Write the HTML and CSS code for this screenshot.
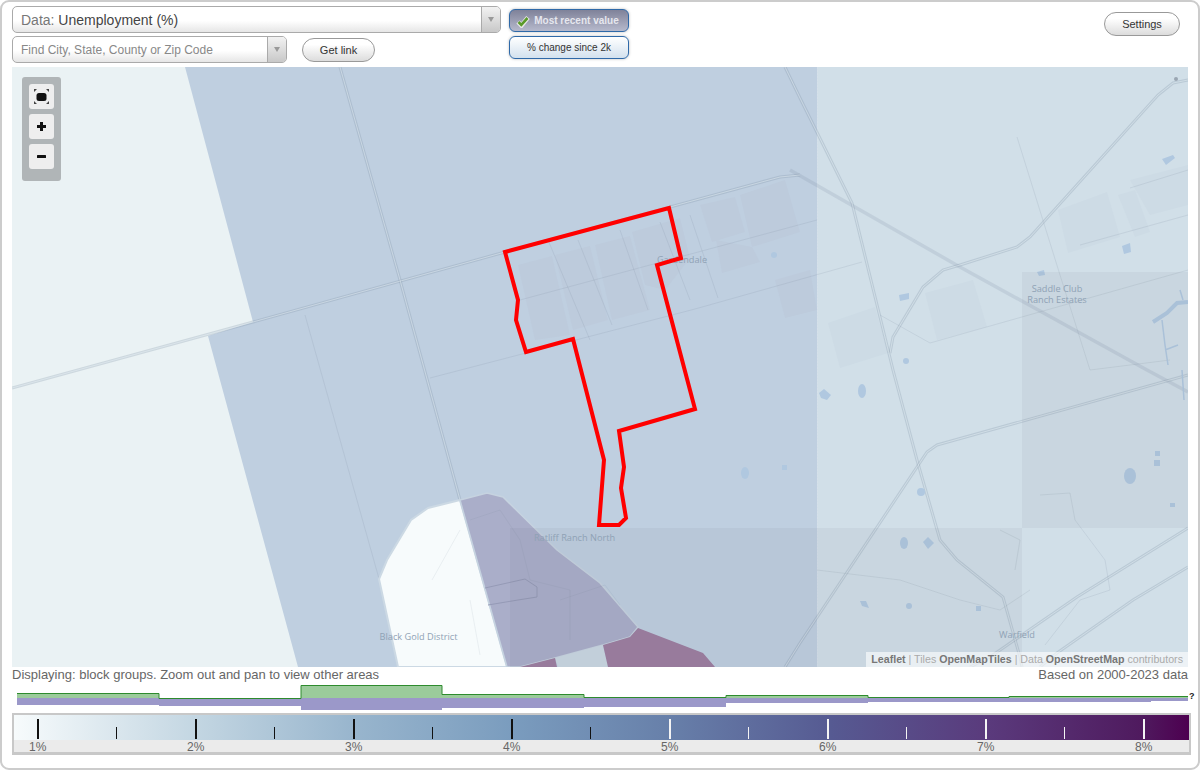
FILE: index.html
```html
<!DOCTYPE html>
<html lang="en">
<head>
    <meta charset="UTF-8">
    <title>Unemployment map</title>
    <link rel="stylesheet" href="styles.css">
</head>
<body>
<div class="frame">
    <div class="topbar">
        <div class="selects">
            <div class="select select-data">
                <div class="select-text"><span class="select-key">Data:</span> Unemployment (%)</div>
                <div class="select-arrow"><i></i></div>
            </div>
            <div class="find-row">
                <div class="select select-find">
                    <div class="select-text">Find City, State, County or Zip Code</div>
                    <div class="select-arrow"><i></i></div>
                </div>
                <button class="pill link-btn">Get link</button>
            </div>
        </div>
        <div class="toggles">
            <button class="toggle active">
                <svg class="check" viewBox="0 0 14 14" width="14" height="14">
                    <path class="check-halo" d="M2 8l3.500 3.500L12 3.500"/>
                    <path class="check-mark" d="M2.500 8l2.800 2.800L11.500 4"/>
                </svg>
                Most recent value
            </button>
            <button class="toggle">% change since 2k</button>
        </div>
        <button class="pill settings-btn">Settings</button>
    </div>

    <div class="map">
        <svg class="map-svg" viewBox="12 67 1176 600" width="1176" height="600">
            <defs>
                <g id="roads">
                    <path d="M340 67L400 280L460 500"/>
                    <path d="M12 388L253 322L505 252L780 177L800 175"/>
                    <path d="M785 67L800 98L852 203L893 370L917 460L940 540L957 560L1003 597L1020 657L1022 667"/>
                    <path d="M1188 80L1173 83L1158 95L1030 237L1017 247L960 265L943 270L923 287L893 337L890 353"/>
                    <path d="M1188 375L937 445L927 452L800 643L785 667"/>
                    <path d="M1188 528L1077 597L990 657L970 667"/>
                    <path d="M1188 567L1133 600L1057 653L1040 667"/>
                </g>
            </defs>

            <!-- areas -->
            <rect class="a-right" x="817" y="67" width="371" height="600"/>
            <polygon class="a-blue" points="185,67 817,67 817,667 298,667 208,336 253,322"/>
            <line class="a-seam" x1="817.500" y1="67" x2="817.500" y2="667"/>

            <!-- land use blocks -->
            <polygon class="block" points="1058,210 1107,192 1120,237 1068,253"/>
            <polygon class="block" points="925,293 973,280 987,327 937,340"/>
            <polygon class="block" points="828,323 875,307 888,353 840,368"/>
            <polygon class="block" points="1130,180 1188,165 1188,205 1150,215"/>
            <polygon class="block" points="1118,195 1135,190 1150,232 1135,237"/>
            <polygon class="block-dark" points="740,195 785,180 800,232 752,247"/>
            <polygon class="block-dark" points="700,205 735,197 745,232 712,242"/>
            <polygon class="block-dark" points="716,240 752,247 760,262 722,273"/>
            <polygon class="block-dark" points="632,232 680,218 690,258 665,290 645,285"/>
            <polygon class="block-dark" points="775,280 810,270 817,310 785,318"/>
            <polygon class="block-dark" points="595,245 630,236 650,310 612,320"/>
            <polygon class="block-dark" points="555,255 590,246 608,320 573,330"/>
            <polygon class="block-dark" points="518,265 552,256 570,335 535,340"/>

            <!-- thin streets -->
            <path class="street" d="M430 378L695 309L862 262"/>
            <path class="street" d="M520 300L817 220"/>
            <path class="street" d="M305 315L392 625"/>
            <path class="street" d="M548 240L590 340M578 240L612 325M620 230L648 310M660 222L690 300M690 215L718 298"/>
            <path class="street" d="M1017 137L1060 275L1090 370L1170 360M1188 170L1130 188M1188 215L1080 245"/>
            <path class="street" d="M880 315L930 343L1188 270"/>
            <path class="street" d="M1040 495L1070 493L1075 520L1105 560L1110 590L1080 600L1045 645M1000 530L1020 540L1015 570"/>
            <path class="street" d="M817 570L900 580L960 600L1000 610L1030 590"/>

            <!-- roads -->
            <path class="road-wide" d="M790 170L960 267L1147 370L1188 392"/>
            <use class="road-outer" href="#roads"/>
            <use class="road-inner" href="#roads"/>

            <!-- water -->
            <g class="water">
                <ellipse cx="745" cy="473" rx="4" ry="6"/>
                <rect x="782" y="465" width="5" height="5"/>
                <circle cx="774" cy="255" r="3"/>
                <polygon points="899,295 909,293 909,299 900,301"/>
                <polygon points="1122,246 1130,243 1131,252 1124,254"/>
                <polygon points="819,393 824,389 831,395 827,400 821,398"/>
                <ellipse cx="862" cy="391" rx="4" ry="7"/>
                <circle cx="906" cy="361" r="3"/>
                <ellipse cx="904" cy="543" rx="4" ry="6"/>
                <polygon points="923,542 928,537 934,543 928,549"/>
                <circle cx="921" cy="492" r="4"/>
                <polygon points="860,601 866,601 869,608 862,606"/>
                <circle cx="909" cy="606" r="3"/>
                <rect x="976" y="606" width="5" height="5"/>
                <ellipse cx="1130" cy="476" rx="6" ry="8"/>
                <rect x="1154" y="460" width="6" height="6"/>
                <rect x="1170" y="503" width="5" height="4"/>
                <rect x="1155" y="451" width="5" height="5"/>
                <polygon points="1037,272 1044,270 1045,275 1039,276"/>
                <polygon points="1162,159 1173,155 1175,158 1166,165"/>
            </g>
            <path class="river" d="M1153 322L1167 313L1177 303L1188 302"/>
            <path class="river-thin" d="M1162 320L1165 345L1168 365M1165 350L1178 345M1180 290L1183 300M1182 370L1184 400"/>
            <circle class="peak" cx="1176" cy="79" r="2"/>

            <!-- block groups -->
            <polygon class="g-white" points="460,500 428,508 411,520 387,560 379,579 398,667 507,667"/>
            <polygon class="g-mid" points="460,500 487,493 503,497 557,550 600,583 638,627 630,637 603,645 555,658 520,667 507,667"/>
            <polygon class="g-pale" points="555,658 603,645 608,667 558,667"/>
            <polygon class="g-dark" points="638,628 703,653 715,667 608,667 603,645 630,637"/>
            <polygon class="g-dark" points="520,667 555,658 557,667"/>
            <path class="street-line" d="M485 588L525 579L537 587L537 597L518 600L488 605"/>
            <path class="street-soft" d="M470 520L500 510L520 540L530 580L570 590L570 640M560 600L605 585L620 605M432 580L460 530M480 655L470 600"/>

            <!-- darker tiles -->
            <rect class="tile" x="510" y="528" width="307" height="139"/>
            <rect class="tile" x="817" y="528" width="205" height="139"/>
            <rect class="tile" x="1022" y="272" width="166" height="256"/>

            <!-- place names -->
            <text class="place" x="682" y="263" text-anchor="middle">Gardendale</text>
            <text class="place" x="574.500" y="541" text-anchor="middle">Ratliff Ranch North</text>
            <text class="place" x="418.500" y="640" text-anchor="middle">Black Gold District</text>
            <text class="place" text-anchor="middle"><tspan x="1057" y="292">Saddle Club</tspan><tspan x="1057" y="303">Ranch Estates</tspan></text>
            <text class="place" x="1017" y="638" text-anchor="middle">Warfield</text>

            <polygon class="selected" points="505,252 669,208 681,258 657,265 695,409 619,431 624,467 621,488 626,518 619,525 599,525 604,460 573,339 526,352 516,320 518,300"/>
        </svg>

        <div class="map-controls">
            <button class="map-btn">
                <svg viewBox="0 0 25 25" width="25" height="25">
                    <rect class="ic-fill" x="7.500" y="9" width="10" height="8" rx="2.500"/>
                    <path class="ic-arrow" d="M5 5h3l-3 3zM20 5h-3l3 3zM5 20h3l-3-3zM20 20h-3l3-3z"/>
                </svg>
            </button>
            <button class="map-btn">
                <svg viewBox="0 0 25 25" width="25" height="25"><path class="ic-fill" d="M11 8h3v3h3v3h-3v3h-3v-3H8v-3h3z"/></svg>
            </button>
            <button class="map-btn">
                <svg viewBox="0 0 25 25" width="25" height="25"><rect class="ic-fill" x="8" y="11" width="9" height="3" rx="0.500"/></svg>
            </button>
        </div>

        <div class="attribution"><b>Leaflet</b> | Tiles <b>OpenMapTiles</b> | Data <b>OpenStreetMap</b> contributors</div>
    </div>

    <div class="status">
        <span>Displaying: block groups. Zoom out and pan to view other areas</span>
        <span>Based on 2000-2023 data</span>
    </div>

    <div class="histogram">
        <svg viewBox="17 685 1171 27" width="1171" height="27">
            <path class="hist-purple" d="M17 698H1188V701H1151V702H868V703H726V707H584V708H442V710H301V706H159V705H17Z"/>
            <path class="hist-green" d="M17 698V693.500H159V698.500H301V685.500H442V694.500H584V697.500H726V695.500H868V697.500H1009V696.500H1188V698Z"/>
            <path class="hist-top" d="M17 693.500H159V698.500H301V685.500H442V694.500H584V697.500H726V695.500H868V697.500H1009V696.500H1188"/>
        </svg>
        <span class="hist-help">?</span>
    </div>

    <div class="legend">
        <div class="legend-bar">
            <i class="tick major"></i><i class="tick"></i>
            <i class="tick major"></i><i class="tick"></i>
            <i class="tick major"></i><i class="tick"></i>
            <i class="tick major"></i><i class="tick"></i>
            <i class="tick major light"></i><i class="tick light"></i>
            <i class="tick major light"></i><i class="tick light"></i>
            <i class="tick major light"></i><i class="tick light"></i>
            <i class="tick major light"></i>
        </div>
        <div class="legend-labels">
            <span>1%</span><span>2%</span><span>3%</span><span>4%</span>
            <span>5%</span><span>6%</span><span>7%</span><span>8%</span>
        </div>
    </div>
</div>
</body>
</html>
```

FILE: styles.css
```css
* {
    box-sizing: border-box;
}
body {
    margin: 0;
    background: #fff;
    font-family: "Liberation Sans", Arial, sans-serif;
    color: #555;
}
button {
    font-family: inherit;
    cursor: pointer;
}
.frame {
    height: 770px;
    border: 2px solid #ccc;
    border-radius: 9px;
    padding: 4px 10px 0;
}

/* top bar */
.topbar {
    display: flex;
    height: 61px;
}
.selects {
    display: flex;
    flex-direction: column;
    gap: 3px;
    width: 489px;
}
.select {
    display: flex;
    border: 1px solid #aaa;
    border-radius: 5px;
    background: linear-gradient(#fff 55%, #e6e6e6);
    overflow: hidden;
}
.select-data {
    height: 27px;
}
.select-find {
    width: 275px;
    height: 27px;
}
.select-text {
    flex: 1;
    padding-left: 8px;
    line-height: 27px;
    font-size: 14px;
    color: #444;
}
.select-key {
    color: #777;
}
.select-find .select-text {
    font-size: 12px;
    color: #888;
}
.select-arrow {
    display: flex;
    align-items: center;
    justify-content: center;
    width: 19px;
    border-left: 1px solid #aaa;
    background: linear-gradient(#f2f2f2, #c8c8c8);
}
.select-arrow i {
    border: 3px solid transparent;
    border-top: 5px solid #999;
    border-bottom: 0;
}
.find-row {
    display: flex;
    align-items: center;
    gap: 15px;
}
.pill {
    border: 1px solid #999;
    border-radius: 12px;
    background: linear-gradient(#fff 25%, #dcdcdc);
    font-size: 11px;
    color: #333;
    padding: 0;
    height: 24px;
}
.link-btn {
    width: 73px;
}
.settings-btn {
    width: 76px;
    margin: 6px 8px 0 auto;
}
.toggles {
    display: flex;
    flex-direction: column;
    gap: 4px;
    margin: 3px 0 0 8px;
    width: 120px;
}
.toggle {
    display: flex;
    align-items: center;
    justify-content: center;
    gap: 4px;
    height: 23px;
    padding: 0;
    border: 1px solid #2f69a8;
    border-radius: 6px;
    background: linear-gradient(#fff, #d3e1ee);
    box-shadow: 0 0 3px #bbb;
    font-size: 10px;
    color: #333;
}
.toggle.active {
    background: linear-gradient(#7f8299, #b6b9cc);
    font-weight: bold;
    color: #e6e7ee;
}
.check {
    margin-left: -3px;
}
.check-halo {
    fill: none;
    stroke: #e8e8e8;
    stroke-width: 4.500;
}
.check-mark {
    fill: none;
    stroke: #5a9a2a;
    stroke-width: 2.600;
}

/* map */
.map {
    position: relative;
    height: 600px;
    background: #eaf2f4;
    overflow: hidden;
}
.map-svg {
    display: block;
}
.a-right { fill: #d1dfe8; }
.a-blue { fill: #bfcfe0; }
.a-seam {
    stroke: #d5e0ea;
    stroke-width: 1;
    stroke-dasharray: 2 1;
}
.block { fill: #cddbe5; }
.block-dark { fill: #bdcbdc; }
.street,
.street-soft,
.street-line {
    fill: none;
    stroke: rgba(110, 130, 150, 0.14);
    stroke-width: 1;
}
.street-soft {
    stroke: rgba(110, 130, 150, 0.1);
}
.street-line {
    stroke: #959ab6;
}
.road-outer {
    fill: none;
    stroke: rgba(120, 140, 160, 0.25);
    stroke-width: 3;
}
.road-inner {
    fill: none;
    stroke: rgba(235, 243, 248, 0.45);
    stroke-width: 1;
}
.road-wide {
    fill: none;
    stroke: rgba(120, 140, 160, 0.18);
    stroke-width: 3.500;
}
.water { fill: #b0c8e0; }
.river {
    fill: none;
    stroke: #b0c8e0;
    stroke-width: 4;
}
.river-thin {
    fill: none;
    stroke: #b0c8e0;
    stroke-width: 1.500;
}
.peak { fill: #9aa6b2; }
.g-white {
    fill: #f7fbfc;
    stroke: #ccd9e4;
    stroke-width: 2;
}
.g-mid {
    fill: #aaaec9;
    stroke: #c6d3e0;
    stroke-width: 1.500;
}
.g-pale { fill: #c9d7e2; }
.g-dark { fill: #9d7ea0; }
.tile { fill: rgba(70, 80, 90, 0.055); }
.place {
    font-family: "Open Sans", sans-serif;
    font-size: 9.200px;
    fill: #8fa2b5;
}
.selected {
    fill: none;
    stroke: #f00;
    stroke-width: 4;
}
.map-controls {
    position: absolute;
    top: 10px;
    left: 10px;
    display: flex;
    flex-direction: column;
    gap: 5px;
    width: 39px;
    height: 104px;
    padding: 7px;
    background: #b0b5b7;
    border-radius: 3px;
}
.map-btn {
    width: 25px;
    height: 25px;
    padding: 0;
    border: 0;
    border-radius: 3px;
    background: #eee;
}
.map-btn svg {
    display: block;
}
.ic-fill { fill: #111; }
.ic-arrow { fill: #444; }
.attribution {
    position: absolute;
    right: 0;
    bottom: 0;
    height: 15px;
    padding: 0 5px;
    background: rgba(255, 255, 255, 0.6);
    font-size: 10.650px;
    line-height: 15px;
    color: #aaa;
}
.attribution b {
    color: #777;
}

/* below the map */
.status {
    display: flex;
    justify-content: space-between;
    height: 15px;
    font-size: 13px;
    line-height: 16px;
    color: #666;
}
.histogram {
    position: relative;
    height: 27px;
    margin: 3px 0 0 5px;
}
.histogram svg {
    display: block;
}
.hist-green {
    fill: #9bcb9b;
}
.hist-top {
    fill: none;
    stroke: #2e8b2e;
    stroke-width: 1;
}
.hist-purple {
    fill: #9b98c9;
}
.hist-help {
    position: absolute;
    top: 6px;
    left: 1172px;
    font-size: 9px;
    font-weight: bold;
    color: #222;
}
.legend {
    width: 1179px;
    height: 42px;
    margin-top: 1px;
    border: 2px solid #c8c8c8;
    border-bottom-width: 3px;
    background: #fff;
}
.legend-bar {
    display: flex;
    align-items: flex-end;
    height: 25px;
    padding: 0 0 1px 23px;
    background: linear-gradient(90deg, #f7fbfc 0, #c3d6e2 15.500%, #98b5cd 29%, #7a9cbe 42.500%, #677fa9 56%, #565a92 69.500%, #5a3a7c 83%, #4f1a5e 96%, #4d0050 100%);
}
.tick {
    flex: none;
    width: 79px;
    height: 12px;
}
.tick:last-child {
    width: 2px;
}
.tick::before {
    content: "";
    display: block;
    width: 1px;
    height: 100%;
    background: #111;
}
.tick.major {
    height: 20px;
}
.tick.major::before {
    width: 2px;
}
.tick.light::before {
    background: #f4f4f4;
}
.legend-labels {
    display: flex;
    height: 12px;
    padding-left: 15px;
    background: #ebebeb;
    font-size: 12px;
    line-height: 14px;
    color: #666;
}
.legend-labels span {
    flex: none;
    width: 158px;
}
.legend-labels span:last-child {
    width: auto;
}
```
